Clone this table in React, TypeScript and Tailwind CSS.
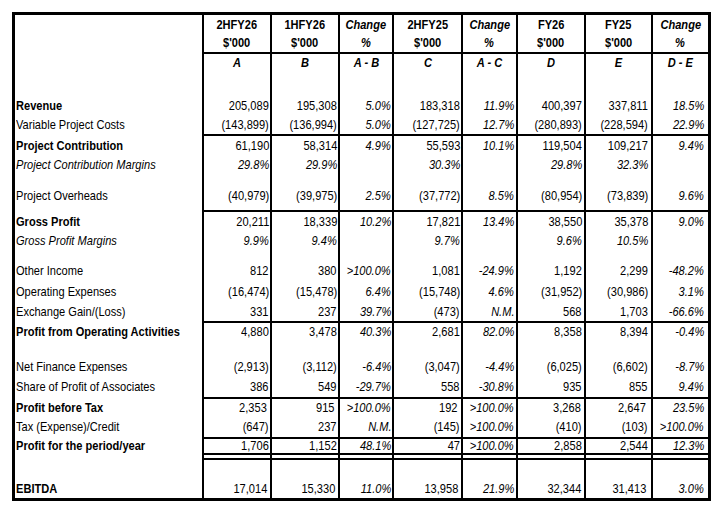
import React from "react";

const FONT = "font-['Liberation_Sans',Arial,sans-serif]";
const NARROW_R = "inline-block scale-x-[0.82] origin-right";
const NARROW_L = "inline-block scale-x-[0.82] origin-left";
const NARROW_C = "inline-block scale-x-[0.82] origin-center";

const COLS = [
  "w-[68px] pr-[1px]",
  "w-[68px] pr-[1px]",
  "w-[54px] pr-[1px]",
  "w-[69px] pr-[1px]",
  "w-[55px] pr-[2px]",
  "w-[68px] pr-[2px]",
  "w-[67px] pr-[3px]",
  "w-[57px] pr-[4px]",
];

const COLS_SHIFT = [
  "w-[68px] pr-[3px]",
  "w-[68px] pr-[3px]",
  "w-[54px] pr-[1px]",
  "w-[69px] pr-[3px]",
  "w-[55px] pr-[2px]",
  "w-[68px] pr-[3px]",
  "w-[67px] pr-[5px]",
  "w-[57px] pr-[4px]",
];

const WIDTHS = ["w-[68px]", "w-[68px]", "w-[54px]", "w-[69px]", "w-[55px]", "w-[68px]", "w-[67px]", "w-[57px]"];

type RowProps = {
  h: string;
  label?: string;
  kind?: "bold" | "italic" | "normal";
  values?: string[];
  top?: boolean;
  bottom?: boolean;
  align?: "center" | "end";
  shift?: boolean;
};

function isPct(v: string) {
  return v.endsWith("%") || v === "N.M.";
}

function Row({ h, label = "", kind = "normal", values, top, bottom, align = "center", shift }: RowProps) {
  const vals = values ?? ["", "", "", "", "", "", "", ""];
  const itemAlign = align === "end" ? "items-end" : "items-center";
  const labelFont = kind === "bold" ? "font-bold" : kind === "italic" ? "italic" : "";
  const cols = shift ? COLS_SHIFT : COLS;
  return (
    <div className={`flex ${h}`}>
      <div
        className={`w-[187px] shrink-0 flex ${itemAlign} pl-[1px] border-transparent ${top ? "border-t-2" : ""} ${bottom ? "border-b-2" : ""}`}
      >
        <span className={`${NARROW_L} leading-[18px] whitespace-nowrap ${labelFont}`}>{label}</span>
      </div>
      {vals.map((v, i) => (
        <div
          key={i}
          className={`${cols[i]} shrink-0 flex ${itemAlign} justify-end border-l-2 border-black ${top ? "border-t-2" : ""} ${bottom ? "border-b-2" : ""}`}
        >
          <span className={`${NARROW_R} leading-[18px] whitespace-nowrap ${isPct(v) ? "italic" : ""}`}>{v}</span>
        </div>
      ))}
    </div>
  );
}

const HEAD1: [string, string, boolean][] = [
  ["2HFY26", "$'000", false],
  ["1HFY26", "$'000", false],
  ["Change", "%", true],
  ["2HFY25", "$'000", false],
  ["Change", "%", true],
  ["FY26", "$'000", false],
  ["FY25", "$'000", false],
  ["Change", "%", true],
];

const HEAD2 = ["A", "B", "A - B", "C", "A - C", "D", "E", "D - E"];

export default function App() {
  return (
    <div className={`w-[720px] h-[513px] bg-white text-black text-[13.5px] ${FONT} pt-[12px] pl-[12px]`}>
      <div className="w-[699px] border-[3px] border-black flex flex-col">
        {/* header line 1 */}
        <div className="flex h-[37px]">
          <div className="w-[187px] shrink-0" />
          {HEAD1.map(([a, b, it], i) => (
            <div
              key={i}
              className={`${WIDTHS[i]} shrink-0 border-l-2 border-black flex flex-col items-center pt-[1px] font-bold ${it ? "italic" : ""}`}
            >
              <span className={`${NARROW_C} leading-[18px] whitespace-nowrap`}>{a}</span>
              <span className={`${NARROW_C} leading-[18px] whitespace-nowrap`}>{b}</span>
            </div>
          ))}
        </div>
        {/* header line 2 */}
        <div className="flex h-[20px]">
          <div className="w-[187px] shrink-0" />
          {HEAD2.map((a, i) => (
            <div
              key={i}
              className={`${WIDTHS[i]} shrink-0 border-l-2 border-t-2 border-black flex items-center justify-center font-bold italic`}
            >
              <span className={`${NARROW_C} leading-[18px] whitespace-nowrap`}>{a}</span>
            </div>
          ))}
        </div>
        <Row h="h-[24px]" />
        <Row h="h-[19px]" label="Revenue" kind="bold" values={["205,089", "195,308", "5.0%", "183,318", "11.9%", "400,397", "337,811", "18.5%"]} />
        <Row h="h-[19px]" label="Variable Project Costs" values={["(143,899)", "(136,994)", "5.0%", "(127,725)", "12.7%", "(280,893)", "(228,594)", "22.9%"]} />
        <Row h="h-[21px]" top label="Project Contribution" kind="bold" values={["61,190", "58,314", "4.9%", "55,593", "10.1%", "119,504", "109,217", "9.4%"]} />
        <Row h="h-[19px]" label="Project Contribution Margins" kind="italic" values={["29.8%", "29.9%", "", "30.3%", "", "29.8%", "32.3%", ""]} />
        <Row h="h-[12px]" />
        <Row h="h-[19px]" label="Project Overheads" values={["(40,979)", "(39,975)", "2.5%", "(37,772)", "8.5%", "(80,954)", "(73,839)", "9.6%"]} />
        <Row h="h-[5px]" />
        <Row h="h-[21px]" top label="Gross Profit" kind="bold" values={["20,211", "18,339", "10.2%", "17,821", "13.4%", "38,550", "35,378", "9.0%"]} />
        <Row h="h-[19px]" label="Gross Profit Margins" kind="italic" values={["9.9%", "9.4%", "", "9.7%", "", "9.6%", "10.5%", ""]} />
        <Row h="h-[11px]" />
        <Row h="h-[20px]" label="Other Income" values={["812", "380", ">100.0%", "1,081", "-24.9%", "1,192", "2,299", "-48.2%"]} />
        <Row h="h-[21px]" label="Operating Expenses" values={["(16,474)", "(15,478)", "6.4%", "(15,748)", "4.6%", "(31,952)", "(30,986)", "3.1%"]} />
        <Row h="h-[19px]" label="Exchange Gain/(Loss)" values={["331", "237", "39.7%", "(473)", "N.M.", "568", "1,703", "-66.6%"]} />
        <Row h="h-[20px]" top label="Profit from Operating Activities" kind="bold" values={["4,880", "3,478", "40.3%", "2,681", "82.0%", "8,358", "8,394", "-0.4%"]} />
        <Row h="h-[16px]" />
        <Row h="h-[20px]" label="Net Finance Expenses" values={["(2,913)", "(3,112)", "-6.4%", "(3,047)", "-4.4%", "(6,025)", "(6,602)", "-8.7%"]} />
        <Row h="h-[20px]" label="Share of Profit of Associates" values={["386", "549", "-29.7%", "558", "-30.8%", "935", "855", "9.4%"]} />
        <Row h="h-[20px]" top shift label="Profit before Tax" kind="bold" values={["2,353", "915", ">100.0%", "192", ">100.0%", "3,268", "2,647", "23.5%"]} />
        <Row h="h-[20px]" label="Tax (Expense)/Credit" values={["(647)", "237", "N.M.", "(145)", ">100.0%", "(410)", "(103)", ">100.0%"]} />
        <Row h="h-[18px]" top bottom label="Profit for the period/year" kind="bold" values={["1,706", "1,152", "48.1%", "47", ">100.0%", "2,858", "2,544", "12.3%"]} />
        <Row h="h-[3px]" />
        <Row h="h-[40px]" top shift align="end" label="EBITDA" kind="bold" values={["17,014", "15,330", "11.0%", "13,958", "21.9%", "32,344", "31,413", "3.0%"]} />
      </div>
    </div>
  );
}
